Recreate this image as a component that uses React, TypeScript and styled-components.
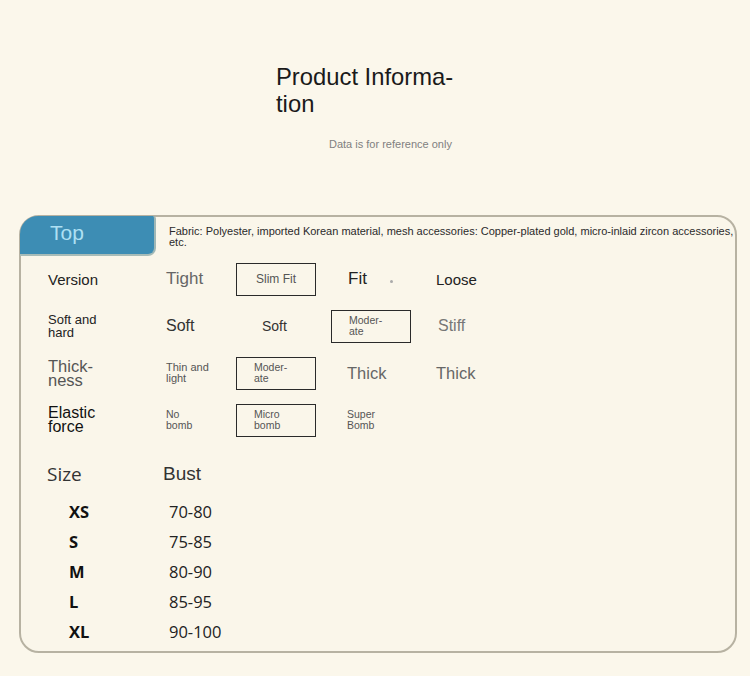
import React from 'react'
import styled, { createGlobalStyle } from 'styled-components'

const GlobalStyle = createGlobalStyle`
  html, body {
    margin: 0;
    padding: 0;
    background: #fbf7eb;
  }
  body {
    font-family: "Liberation Sans", Arial, sans-serif;
    color: #222;
  }
`

const Page = styled.div`
  width: 750px;
  height: 676px;
  background: #fbf7eb;
  display: flex;
  flex-direction: column;
  overflow: hidden;
`

const Header = styled.header`
  display: flex;
  flex-direction: column;
  padding: 63px 0 0 276px;
  height: 151px;
  box-sizing: border-box;
`

const Title = styled.h1`
  margin: 0;
  width: 200px;
  font-size: 23.8px;
  font-weight: 400;
  line-height: 27px;
  color: #1a1a1a;
`

const Subtitle = styled.p`
  margin: 21px 0 0 53px;
  font-size: 11px;
  color: #808080;
`

const Card = styled.section`
  margin: 64px 0 0 19px;
  width: 718px;
  height: 438px;
  box-sizing: border-box;
  border: 2px solid #b7b2a2;
  border-radius: 20px;
  background: #faf6ea;
  display: flex;
  flex-direction: column;
`

const TabRow = styled.div`
  display: flex;
  align-items: flex-start;
  height: 40px;
`

const Tab = styled.div`
  margin: -1px 0 0 -1px;
  width: 136px;
  height: 40px;
  box-sizing: border-box;
  background: #3d8db4;
  border-radius: 18px 3px 8px 0;
  border-right: 2px solid #9fb7b6;
  border-bottom: 2px solid #a7bcb8;
  color: #aee0f3;
  font-size: 21px;
  padding: 5px 0 0 30px;
`

const Fabric = styled.p`
  margin: 9px 0 0 13px;
  font-size: 11px;
  line-height: 11px;
  color: #2a2a2a;
`

const Attrs = styled.div`
  display: grid;
  grid-template-columns: 145px 70px 95px 105px 1fr;
  grid-auto-rows: 47px;
  padding-top: 5px;
`

const Cell = styled.div<{ $size?: number; $color?: string; $lh?: number; $pad?: number }>`
  display: flex;
  align-items: center;
  padding-left: ${p => p.$pad ?? 0}px;
  font-size: ${p => p.$size ?? 16}px;
  line-height: ${p => p.$lh ? `${p.$lh}px` : 'normal'};
  color: ${p => p.$color ?? '#222'};
  height: 34px;
`

const Label = styled(Cell)`
  padding-left: 27px;
`

const Boxed = styled.div<{ $center?: boolean }>`
  display: flex;
  align-items: center;
  justify-content: ${p => p.$center ? 'center' : 'flex-start'};
  width: 80px;
  height: 33px;
  box-sizing: border-box;
  border: 1.5px solid #2a2a2a;
  padding-left: ${p => p.$center ? 0 : 17}px;
  font-size: ${p => p.$center ? 12 : 10.5}px;
  line-height: 11px;
  color: #555;
`

const Dot = styled.span`
  display: inline-block;
  width: 3px;
  height: 3px;
  border-radius: 50%;
  background: #aaa;
  margin: 4px 0 0 23px;
`

const SizeTable = styled.div`
  display: grid;
  grid-template-columns: 116px 1fr;
  grid-template-rows: 45px;
  grid-auto-rows: 30px;
  padding: 1px 0 0 26px;
`

const HeadCell = styled.div<{ $font?: string }>`
  display: flex;
  align-items: center;
  font-family: ${p => p.$font ?? '"Liberation Sans", Arial, sans-serif'};
  font-size: 19px;
  color: #333;
`

const SizeName = styled.div`
  display: flex;
  align-items: center;
  padding-left: 22px;
  font-family: "Open Sans", sans-serif;
  font-weight: 700;
  font-size: 16.5px;
  color: #111;
`

const SizeValue = styled.div`
  display: flex;
  align-items: center;
  padding-left: 6px;
  font-family: "Open Sans", sans-serif;
  font-size: 16.5px;
  color: #222;
`

const sizes = [
  ['XS', '70-80'],
  ['S', '75-85'],
  ['M', '80-90'],
  ['L', '85-95'],
  ['XL', '90-100'],
]

export default function App() {
  return (
    <Page>
      <GlobalStyle />
      <Header>
        <Title>Product Informa-<br />tion</Title>
        <Subtitle>Data is for reference only</Subtitle>
      </Header>
      <Card>
        <TabRow>
          <Tab>Top</Tab>
          <Fabric>
            Fabric: Polyester, imported Korean material, mesh accessories: Copper-plated gold, micro-inlaid zircon accessories,<br />etc.
          </Fabric>
        </TabRow>
        <Attrs>
          <Label $size={15}>Version</Label>
          <Cell $size={17} $color="#666">Tight</Cell>
          <Cell><Boxed $center>Slim Fit</Boxed></Cell>
          <Cell $size={17} $pad={17}>Fit<Dot /></Cell>
          <Cell $size={15}>Loose</Cell>

          <Label $size={13} $lh={13}>Soft and<br />hard</Label>
          <Cell $size={16} $color="#333">Soft</Cell>
          <Cell $size={14} $color="#333" $pad={26}>Soft</Cell>
          <Cell><Boxed>Moder-<br />ate</Boxed></Cell>
          <Cell $size={16} $color="#777" $pad={2}>Stiff</Cell>

          <Label $size={16.5} $lh={14} $color="#555">Thick-<br />ness</Label>
          <Cell $size={11} $lh={11} $color="#555">Thin and<br />light</Cell>
          <Cell><Boxed>Moder-<br />ate</Boxed></Cell>
          <Cell $size={16.5} $color="#666" $pad={16}>Thick</Cell>
          <Cell $size={16.5} $color="#666">Thick</Cell>

          <Label $size={16} $lh={14} $color="#111">Elastic<br />force</Label>
          <Cell $size={10.5} $lh={11} $color="#555">No<br />bomb</Cell>
          <Cell><Boxed>Micro<br />bomb</Boxed></Cell>
          <Cell $size={10.5} $lh={11} $color="#555" $pad={16}>Super<br />Bomb</Cell>
          <Cell />
        </Attrs>
        <SizeTable>
          <HeadCell $font={'"Open Sans", sans-serif'}>Size</HeadCell>
          <HeadCell>Bust</HeadCell>
          {sizes.map(([name, bust]) => (
            <React.Fragment key={name}>
              <SizeName>{name}</SizeName>
              <SizeValue>{bust}</SizeValue>
            </React.Fragment>
          ))}
        </SizeTable>
      </Card>
    </Page>
  )
}
